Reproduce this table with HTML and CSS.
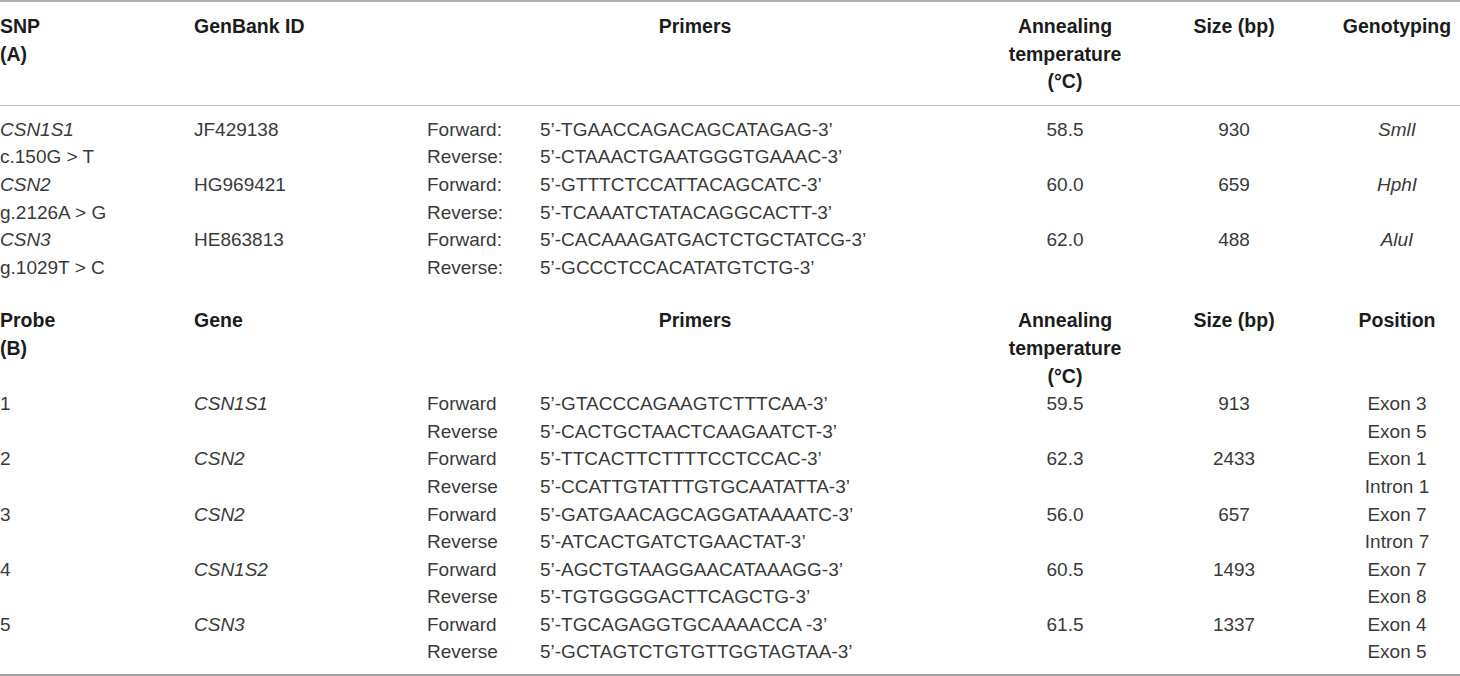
FILE: index.html
```html
<!DOCTYPE html>
<html>
<head>
<meta charset="utf-8">
<link rel="stylesheet" href="styles.css">
</head>
<body>
<table class="primers">
  <colgroup>
    <col class="c1"><col class="c2"><col class="c3"><col class="c4"><col class="c5"><col class="c6"><col class="c7">
  </colgroup>
  <thead>
    <tr class="head head-a">
      <th class="l">SNP<br>(A)</th>
      <th class="l">GenBank ID</th>
      <th class="c" colspan="2">Primers</th>
      <th class="c">Annealing<br>temperature<br>(°C)</th>
      <th class="c">Size (bp)</th>
      <th class="c last">Genotyping</th>
    </tr>
  </thead>
  <tbody class="sec-a">
    <tr class="first">
      <td><i>CSN1S1</i><br>c.150G &gt; T</td>
      <td>JF429138</td>
      <td>Forward:<br>Reverse:</td>
      <td>5’-TGAACCAGACAGCATAGAG-3’<br>5’-CTAAACTGAATGGGTGAAAC-3’</td>
      <td class="c">58.5</td>
      <td class="c">930</td>
      <td class="c last"><i>SmlI</i></td>
    </tr>
    <tr>
      <td><i>CSN2</i><br>g.2126A &gt; G</td>
      <td>HG969421</td>
      <td>Forward:<br>Reverse:</td>
      <td>5’-GTTTCTCCATTACAGCATC-3’<br>5’-TCAAATCTATACAGGCACTT-3’</td>
      <td class="c">60.0</td>
      <td class="c">659</td>
      <td class="c last"><i>HphI</i></td>
    </tr>
    <tr>
      <td><i>CSN3</i><br>g.1029T &gt; C</td>
      <td>HE863813</td>
      <td>Forward:<br>Reverse:</td>
      <td>5’-CACAAAGATGACTCTGCTATCG-3’<br>5’-GCCCTCCACATATGTCTG-3’</td>
      <td class="c">62.0</td>
      <td class="c">488</td>
      <td class="c last"><i>AluI</i></td>
    </tr>
  </tbody>
  <tbody class="sec-b">
    <tr class="head head-b">
      <th class="l">Probe<br>(B)</th>
      <th class="l">Gene</th>
      <th class="c" colspan="2">Primers</th>
      <th class="c">Annealing<br>temperature<br>(°C)</th>
      <th class="c">Size (bp)</th>
      <th class="c last">Position</th>
    </tr>
    <tr>
      <td>1</td>
      <td><i>CSN1S1</i></td>
      <td>Forward<br>Reverse</td>
      <td>5’-GTACCCAGAAGTCTTTCAA-3’<br>5’-CACTGCTAACTCAAGAATCT-3’</td>
      <td class="c">59.5</td>
      <td class="c">913</td>
      <td class="c last">Exon 3<br>Exon 5</td>
    </tr>
    <tr>
      <td>2</td>
      <td><i>CSN2</i></td>
      <td>Forward<br>Reverse</td>
      <td>5’-TTCACTTCTTTTCCTCCAC-3’<br>5’-CCATTGTATTTGTGCAATATTA-3’</td>
      <td class="c">62.3</td>
      <td class="c">2433</td>
      <td class="c last">Exon 1<br>Intron 1</td>
    </tr>
    <tr>
      <td>3</td>
      <td><i>CSN2</i></td>
      <td>Forward<br>Reverse</td>
      <td>5’-GATGAACAGCAGGATAAAATC-3’<br>5’-ATCACTGATCTGAACTAT-3’</td>
      <td class="c">56.0</td>
      <td class="c">657</td>
      <td class="c last">Exon 7<br>Intron 7</td>
    </tr>
    <tr>
      <td>4</td>
      <td><i>CSN1S2</i></td>
      <td>Forward<br>Reverse</td>
      <td>5’-AGCTGTAAGGAACATAAAGG-3’<br>5’-TGTGGGGACTTCAGCTG-3’</td>
      <td class="c">60.5</td>
      <td class="c">1493</td>
      <td class="c last">Exon 7<br>Exon 8</td>
    </tr>
    <tr class="final">
      <td>5</td>
      <td><i>CSN3</i></td>
      <td>Forward<br>Reverse</td>
      <td>5’-TGCAGAGGTGCAAAACCA -3’<br>5’-GCTAGTCTGTGTTGGTAGTAA-3’</td>
      <td class="c">61.5</td>
      <td class="c">1337</td>
      <td class="c last">Exon 4<br>Exon 5</td>
    </tr>
  </tbody>
</table>
</body>
</html>
```
FILE: styles.css
```css
html, body {
  margin: 0;
  padding: 0;
  background: #ffffff;
}

.primers {
  width: 1460px;
  table-layout: fixed;
  border-collapse: collapse;
  font-family: "Liberation Sans", Arial, sans-serif;
  font-size: 19px;
  line-height: 27.6px;
  color: #3a3a3a;
  border-top: 2px solid #b0b0b0;
  border-bottom: 2px solid #a4a4a4;
}

.c1 { width: 194px; }
.c2 { width: 233px; }
.c3 { width: 113px; }
.c4 { width: 423px; }
.c5 { width: 204px; }
.c6 { width: 134px; }
.c7 { width: 159px; }

.primers th,
.primers td {
  padding: 0;
  vertical-align: top;
  text-align: left;
  white-space: nowrap;
}

.primers th {
  font-weight: bold;
  font-size: 19.5px;
  color: #1c1c1c;
}

.primers .c { text-align: center; }
.primers .last { padding-left: 33px; }

.head-a th {
  padding-top: 11px;
  padding-bottom: 9px;
  border-bottom: 1px solid #bcbcbc;
}

.sec-a .first td { padding-top: 10px; }

.head-b th { padding-top: 26px; }

.final td { padding-bottom: 8px; }
```
